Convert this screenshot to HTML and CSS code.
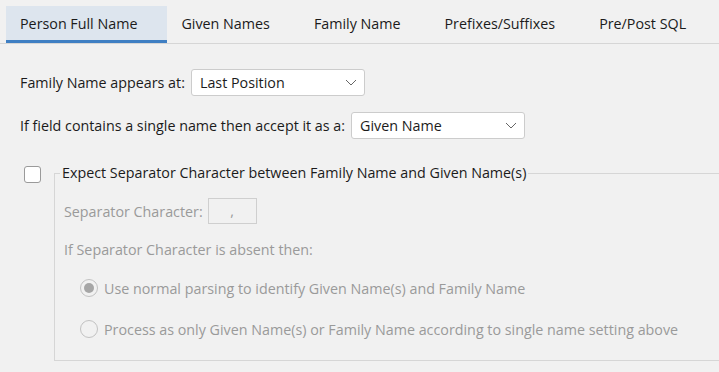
FILE: index.html
```html
<!DOCTYPE html>
<html lang="en">
<head>
    <meta charset="UTF-8">
    <title>Person Full Name</title>
    <link rel="stylesheet" href="styles.css">
</head>
<body>
    <div class="tabs">
        <div class="tab active">Person Full Name</div>
        <div class="tab">Given Names</div>
        <div class="tab">Family Name</div>
        <div class="tab">Prefixes/Suffixes</div>
        <div class="tab">Pre/Post SQL</div>
    </div>

    <div class="panel">
        <div class="row">
            <span class="label">Family Name appears at:</span>
            <div class="dropdown">
                <span>Last Position</span>
                <svg class="chevron" width="12" height="7" viewBox="0 0 12 7"><path d="M1 1 L6 6 L11 1" fill="none" stroke="#666" stroke-width="1"/></svg>
            </div>
        </div>

        <div class="row row-second">
            <span class="label">If field contains a single name then accept it as a:</span>
            <div class="dropdown">
                <span>Given Name</span>
                <svg class="chevron" width="12" height="7" viewBox="0 0 12 7"><path d="M1 1 L6 6 L11 1" fill="none" stroke="#666" stroke-width="1"/></svg>
            </div>
        </div>

        <div class="group-row">
            <div class="checkbox"></div>
            <fieldset class="group">
                <legend>Expect Separator Character between Family Name and Given Name(s)</legend>

                <div class="sep-row">
                    <span class="muted">Separator Character:</span>
                    <div class="sep-input">,</div>
                </div>

                <div class="muted absent">If Separator Character is absent then:</div>

                <div class="radio-row first">
                    <span class="radio checked"></span>
                    <span class="muted">Use normal parsing to identify Given Name(s) and Family Name</span>
                </div>
                <div class="radio-row second">
                    <span class="radio"></span>
                    <span class="muted">Process as only Given Name(s) or Family Name according to single name setting above</span>
                </div>
            </fieldset>
        </div>
    </div>
</body>
</html>
```

FILE: styles.css
```css
:root {
    --bg-color: #f1f1f1;
    --text-color: #1b1b1b;
    --muted-color: #9a9a9a;
    --line-color: #d6d6d6;
    --accent-color: #3f7fc3;
}

body {
    font-family: 'Open Sans', 'Noto Sans', sans-serif;
    font-size: 14.3px;
    background-color: var(--bg-color);
    color: var(--text-color);
    margin: 0;
    padding: 0;
    width: 719px;
    height: 372px;
    overflow: hidden;
}

.tabs {
    display: flex;
    padding: 6px 0 0 6px;
    border-bottom: 1px solid var(--line-color);
}

.tab {
    height: 37px;
    line-height: 36px;
    padding: 0 30px 0 14px;
    box-sizing: border-box;
    white-space: nowrap;
}

.tab.active {
    background-color: #dde5ee;
    box-shadow: inset 0 -3px 0 var(--accent-color);
}

.panel {
    padding: 25px 0 0 20px;
}

.row {
    display: flex;
    align-items: center;
    height: 27px;
}

.row-second {
    margin-top: 16px;
}

.label {
    margin-right: 6px;
}

.dropdown {
    width: 174px;
    height: 27px;
    box-sizing: border-box;
    border: 1px solid #cccccc;
    border-radius: 3px;
    background-color: #ffffff;
    display: flex;
    align-items: center;
    justify-content: space-between;
    padding: 0 7px 0 8px;
}

.chevron {
    display: block;
}

.group-row {
    display: flex;
    align-items: flex-start;
    margin-top: 24px;
    margin-right: -30px;
}

.checkbox {
    width: 17px;
    height: 17px;
    box-sizing: border-box;
    border: 1px solid #9a9a9a;
    border-radius: 3px;
    background-color: #ffffff;
    margin: 3px 0 0 4px;
    flex-shrink: 0;
}

.group {
    flex: 1;
    margin: 0 0 0 13px;
    border: 1px solid var(--line-color);
    padding: 0 0 21px 9px;
    min-width: 0;
}

.group legend {
    line-height: 20px;
    padding: 0 2px;
    margin-left: -4px;
}

.muted {
    color: var(--muted-color);
}

.sep-row {
    display: flex;
    align-items: center;
    margin-top: 15px;
    height: 26px;
}

.sep-input {
    width: 49px;
    height: 26px;
    box-sizing: border-box;
    border: 1px solid #cfcfcf;
    margin-left: 5px;
    text-align: center;
    line-height: 24px;
    color: var(--muted-color);
}

.absent {
    margin-top: 16px;
    line-height: 20px;
}

.radio-row {
    display: flex;
    align-items: center;
    height: 20px;
    padding-left: 16px;
    white-space: nowrap;
}

.radio-row.first {
    margin-top: 18px;
}

.radio-row.second {
    margin-top: 21px;
}

.radio {
    width: 18px;
    height: 18px;
    box-sizing: border-box;
    border: 1px solid #c2c2c2;
    border-radius: 50%;
    margin-right: 6px;
    display: flex;
    align-items: center;
    justify-content: center;
    flex-shrink: 0;
}

.radio.checked::after {
    content: "";
    width: 10px;
    height: 10px;
    border-radius: 50%;
    background-color: #a6a6a6;
}
```
